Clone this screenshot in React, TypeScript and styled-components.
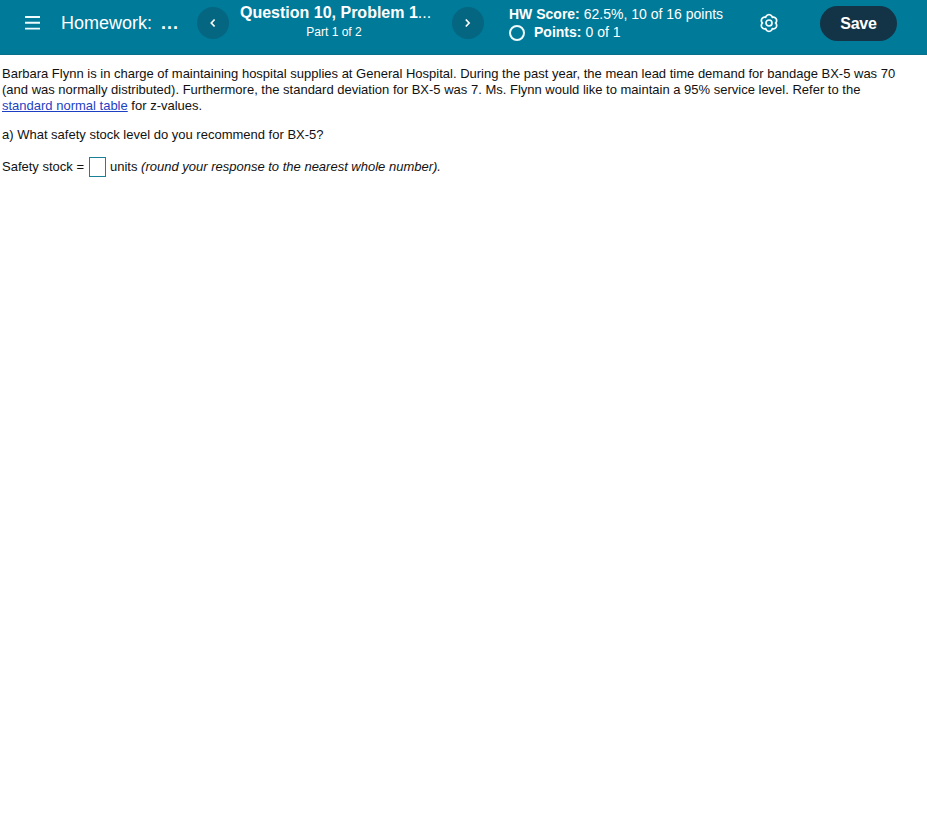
import React from "react";
import styled, { createGlobalStyle } from "styled-components";

const GlobalStyle = createGlobalStyle`
  body { margin: 0; background: #fff; font-family: "Liberation Sans", Arial, sans-serif; }
`;

const Header = styled.header`
  display: grid;
  grid-template-columns: 61px 136px 32px 223px 32px 25px 250px 61px 107px;
  height: 54px;
  background: #007a99;
  border-bottom: 1px solid #08708c;
  color: #fff;
  white-space: nowrap;
`;

const MenuButton = styled.button`
  height: 16px;
  margin: 15px 0 0 24px;
  padding: 0;
  border: 0;
  background: none;
  color: #effcff;
  text-align: left;
  svg { display: block; }
`;

const Title = styled.div`
  display: flex;
  gap: 9px;
  padding-top: 13px;
  font-size: 18px;
  line-height: 21px;
  b { letter-spacing: 1px; }
`;

const NavButton = styled.button`
  display: grid;
  place-items: center;
  width: 32px;
  height: 32px;
  margin-top: 7px;
  padding: 0;
  border: 0;
  border-radius: 50%;
  background: #056681;
  color: #fff;
`;

const Question = styled.div`
  padding: 3px 0 0 11px;
`;

const QuestionName = styled.div`
  font-size: 16px;
  line-height: 19px;
  font-weight: 700;
  span { font-weight: 400; }
`;

const PartLabel = styled.div`
  width: 188px;
  padding-top: 3px;
  font-size: 12px;
  line-height: 15px;
  text-align: center;
`;

const Scores = styled.div`
  grid-column: 7;
  padding-top: 5px;
  font-size: 14px;
  line-height: 18px;
`;

const ScoreLine = styled.div`
  display: flex;
  gap: 4px;
  height: 18px;
`;

const StatusRing = styled.span`
  box-sizing: border-box;
  width: 16px;
  height: 16px;
  margin: 2px 5px 0 0;
  border: 2px solid #f0fbfd;
  border-radius: 50%;
`;

const Settings = styled.button`
  height: 20px;
  margin-top: 13px;
  padding: 0;
  border: 0;
  background: none;
  color: #f4fdff;
  text-align: left;
  svg { display: block; }
`;

const SaveButton = styled.button`
  width: 77px;
  height: 35px;
  margin-top: 6px;
  padding: 0;
  border: 0;
  border-radius: 18px;
  background: #123446;
  color: #fff;
  font: 700 16px/35px "Liberation Sans", Arial, sans-serif;
  letter-spacing: -0.2px;
`;

const Problem = styled.main`
  padding: 11px 2px 0;
  color: #111;
  font-size: 13px;
  line-height: 16px;
  white-space: nowrap;
`;

const Prompt = styled.p`
  margin: 13px 0 0;
`;

const TableLink = styled.a`
  color: #1d3fc4;
  text-decoration: underline;
`;

const AnswerRow = styled.label`
  display: grid;
  grid-template-columns: 87px 21px auto;
  align-items: center;
  height: 21px;
  margin-top: 13px;
`;

const AnswerInput = styled.input`
  box-sizing: border-box;
  width: 17px;
  height: 20px;
  margin: 1px 0 0;
  padding: 0;
  border: 1px solid #1b7f98;
  background: #fff;
`;

const Chevron = ({ d }: { d: string }) => (
  <svg width="8" height="10" viewBox="0 0 8 10" fill="none" stroke="currentColor" strokeWidth="1.7">
    <path d={d} />
  </svg>
);

// Six broad lobes around the centre of a 20px box, the first one pointing up.
const gearOutline = Array.from({ length: 72 }, (_, i) => {
  const angle = (i / 72) * Math.PI * 2;
  const radius = 6.5 + 1.8 * Math.pow(Math.abs(Math.cos(3 * angle)), 0.75);
  const x = 10 + radius * Math.sin(angle);
  const y = 10 - radius * Math.cos(angle);
  return `${x.toFixed(2)},${y.toFixed(2)}`;
}).join(" ");

export default function App() {
  return (
    <>
      <GlobalStyle />
      <Header>
        <MenuButton aria-label="Menu">
          <svg width="17" height="16" viewBox="0 0 17 16" stroke="currentColor" strokeWidth="1.9">
            <path d="M1 2H16M1 7.7H16M1 13.6H16" />
          </svg>
        </MenuButton>
        <Title>
          <span>Homework:</span>
          <b>...</b>
        </Title>
        <NavButton aria-label="Previous">
          <Chevron d="M5.6 1.5L2.3 5L5.6 8.5" />
        </NavButton>
        <Question>
          <QuestionName>
            Question 10, Problem 1<span>...</span>
          </QuestionName>
          <PartLabel>Part 1 of 2</PartLabel>
        </Question>
        <NavButton aria-label="Next">
          <Chevron d="M1.8 1.5L5.1 5L1.8 8.5" />
        </NavButton>
        <Scores>
          <ScoreLine>
            <b>HW Score:</b>
            <span>62.5%, 10 of 16 points</span>
          </ScoreLine>
          <ScoreLine>
            <StatusRing />
            <b>Points:</b>
            <span>0 of 1</span>
          </ScoreLine>
        </Scores>
        <Settings aria-label="Settings">
          <svg width="20" height="20" viewBox="0 0 20 20" fill="none" stroke="currentColor" strokeWidth="1.7" strokeLinejoin="round">
            <polygon points={gearOutline} />
            <circle cx="10" cy="10" r="3" />
          </svg>
        </Settings>
        <SaveButton>Save</SaveButton>
      </Header>
      <Problem>
        <div>
          Barbara Flynn is in charge of maintaining hospital supplies at General Hospital. During the past year, the mean lead time demand for bandage BX-5 was 70
        </div>
        <div>
          (and was normally distributed). Furthermore, the standard deviation for BX-5 was 7. Ms. Flynn would like to maintain a 95% service level. Refer to the
        </div>
        <div>
          <TableLink href="#">standard normal table</TableLink> for z-values.
        </div>
        <Prompt>a) What safety stock level do you recommend for BX-5?</Prompt>
        <AnswerRow>
          <span>Safety stock =</span>
          <AnswerInput aria-label="Safety stock" />
          <span>units <i>(round your response to the nearest whole number).</i></span>
        </AnswerRow>
      </Problem>
    </>
  );
}
